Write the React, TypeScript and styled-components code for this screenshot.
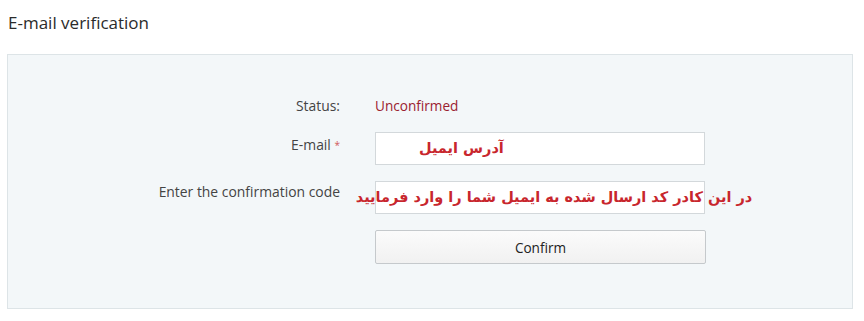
import React from "react";
import styled, { createGlobalStyle } from "styled-components";

const GlobalStyle = createGlobalStyle`
  body {
    margin: 0;
    background: #fff;
    font-family: "Open Sans", "Noto Sans", sans-serif;
  }
`;

const App = () => {
  return (
    <Page>
      <GlobalStyle />
      <Title>E-mail verification</Title>
      <Panel>
        <Form>
          <Label>Status:</Label>
          <StatusValue>Unconfirmed</StatusValue>

          <Label $offset={3}>
            E-mail <Required>*</Required>
          </Label>
          <Field $pad={43}>
            <Note>آدرس ایمیل</Note>
          </Field>

          <Label $offset={1}>Enter the confirmation code</Label>
          <Field $center>
            <Note $shift={14}>در این کادر کد ارسال شده به ایمیل شما را وارد فرمایید</Note>
          </Field>

          <span />
          <ConfirmButton type="button">Confirm</ConfirmButton>
        </Form>
      </Panel>
    </Page>
  );
};

export default App;

const Page = styled.div`
  width: 864px;
  height: 321px;
  overflow: hidden;
`;

const Title = styled.h2`
  margin: 0;
  padding: 12px 0 0 8px;
  height: 54px;
  box-sizing: border-box;
  font-size: 17px;
  line-height: 22px;
  font-weight: 400;
  color: #2b2b2b;
`;

const Panel = styled.section`
  margin-left: 7px;
  width: 846px;
  height: 255px;
  box-sizing: border-box;
  background: #f3f7f9;
  border: 1px solid #dde4e7;
  padding-top: 41px;
`;

const Form = styled.div`
  display: grid;
  grid-template-columns: 332px 330px;
  column-gap: 35px;
  row-gap: 16px;
  align-items: start;
`;

const Label = styled.div<{ $offset?: number }>`
  text-align: right;
  font-size: 13.9px;
  line-height: 20px;
  color: #444;
  padding-top: ${(p) => p.$offset || 0}px;
`;

const Required = styled.span`
  color: #d05a5a;
  font-size: 10px;
  vertical-align: top;
`;

const StatusValue = styled.div`
  font-size: 13.6px;
  line-height: 20px;
  color: #9b2230;
`;

const Field = styled.div<{ $pad?: number; $center?: boolean }>`
  height: 33px;
  box-sizing: border-box;
  background: #fff;
  border: 1px solid #d3d8db;
  display: flex;
  align-items: center;
  justify-content: ${(p) => (p.$center ? "center" : "flex-start")};
  padding-left: ${(p) => p.$pad || 0}px;
  padding-bottom: 2px;
`;

const Note = styled.span<{ $shift?: number }>`
  direction: rtl;
  white-space: nowrap;
  font-family: "DejaVu Sans", sans-serif;
  font-weight: 700;
  font-size: 14.5px;
  color: #c8262d;
  transform: translateX(${(p) => p.$shift || 0}px);
`;

const ConfirmButton = styled.button`
  height: 34px;
  width: 331px;
  margin: 0;
  border: 1px solid #c5c9cc;
  border-radius: 2px;
  background: linear-gradient(#fbfbfb, #f1f1f1);
  font-family: "Open Sans", "Noto Sans", sans-serif;
  font-size: 13.6px;
  color: #222;
  cursor: pointer;
`;
